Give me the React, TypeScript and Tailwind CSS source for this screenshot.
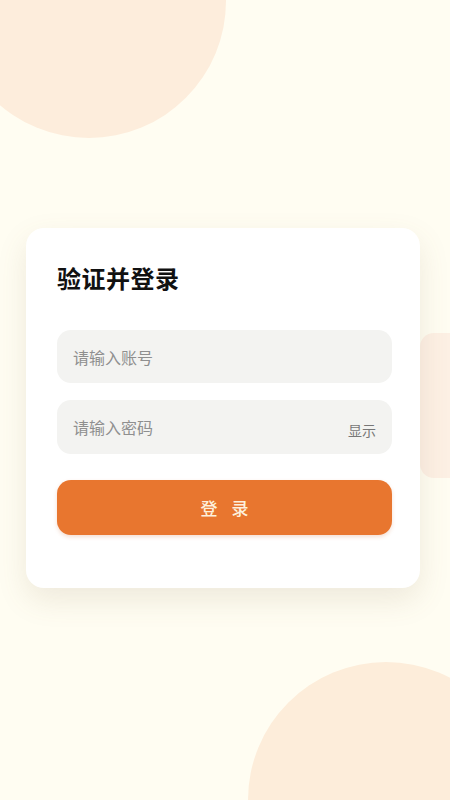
import React, { useState } from 'react';

const font = '"Noto Sans CJK SC", "Noto Sans", sans-serif';

export default function App() {
  const [account, setAccount] = useState('');
  const [password, setPassword] = useState('');
  const [showPwd, setShowPwd] = useState(false);

  return (
    <div
      className="relative min-h-[800px] w-full overflow-hidden bg-[#fffdf2] flex flex-col"
      style={{ fontFamily: font }}
    >
      {/* decorative blobs */}
      <div className="absolute left-[-48px] top-[-136px] h-[274px] w-[274px] rounded-full bg-[#fdeddc]" />
      <div className="absolute left-[248px] top-[662px] h-[276px] w-[276px] rounded-full bg-[#fdedda]" />
      <div className="absolute left-[420px] top-[333px] h-[145px] w-[60px] rounded-l-[14px] bg-[#fdf0e4]" />

      {/* login card */}
      <div className="relative mt-[228px] ml-[26px] w-[394px] rounded-[18px] bg-white pl-[31px] pr-[28px] pt-[34px] pb-[53px] shadow-[0_12px_30px_rgba(120,100,70,0.13)]">
        <h1 className="text-[24px] leading-[32px] font-bold text-[#111] tracking-[0.5px]">验证并登录</h1>

        <div className="mt-[36px] flex flex-col gap-[17px]">
          <div className="flex h-[53px] items-center rounded-[14px] bg-[#f3f3f1] px-[16px]">
            <input
              value={account}
              onChange={(e) => setAccount(e.target.value)}
              placeholder="请输入账号"
              className="w-full bg-transparent text-[16px] text-[#333] outline-none placeholder:text-[#8f8f8f]"
            />
          </div>

          <div className="flex h-[54px] items-center rounded-[14px] bg-[#f3f3f1] pl-[16px] pr-[16px]">
            <input
              type={showPwd ? 'text' : 'password'}
              value={password}
              onChange={(e) => setPassword(e.target.value)}
              placeholder="请输入密码"
              className="flex-1 bg-transparent text-[16px] text-[#333] outline-none placeholder:text-[#8f8f8f]"
            />
            <button
              onClick={() => setShowPwd(!showPwd)}
              className="mt-[6px] text-[14px] text-[#777]"
            >
              {showPwd ? '隐藏' : '显示'}
            </button>
          </div>
        </div>

        <button className="mt-[26px] flex h-[55px] w-full items-center justify-center rounded-[14px] bg-[#e8762f] text-[17px] font-medium tracking-[14px] text-[#fdf0dc] shadow-[0_2px_4px_rgba(200,90,30,0.2)]">
          <span className="pl-[14px]">登录</span>
        </button>
      </div>
    </div>
  );
}
